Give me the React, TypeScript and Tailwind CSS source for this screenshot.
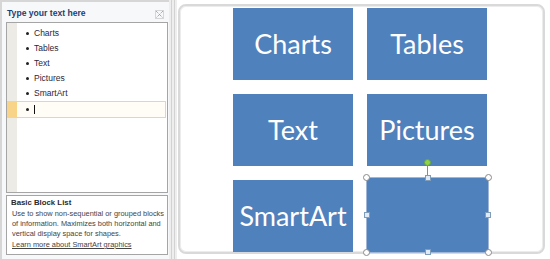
import React from "react";

const items = ["Charts", "Tables", "Text", "Pictures", "SmartArt"];

function Block({ label }: { label: string }) {
  return (
    <div className="flex h-[72px] w-[120px] items-center justify-center bg-[#4f81bd] text-[27px] text-white [font-family:Lato,'Open_Sans',sans-serif]">
      {label}
    </div>
  );
}

function SelectedBlock() {
  const circle = "absolute h-[7px] w-[7px] rounded-full border border-[#8a8a8a] bg-white";
  const square = "absolute h-[6px] w-[6px] border border-[#7f9db9] bg-[#dfeaf6]";
  return (
    <div className="relative mt-[-2px] h-[74px] w-[121px] bg-[#4f81bd] outline outline-1 outline-[#9fb6d6]">
      <div className="absolute left-[60px] top-[-14px] h-[14px] w-px bg-[#8a8a8a]" />
      <div className="absolute left-[57px] top-[-19px] h-[7px] w-[7px] rounded-full border border-[#6aa52c] bg-[#8fd34a]" />
      <div className={`${circle} left-[-4px] top-[-4px]`} />
      <div className={`${circle} right-[-4px] top-[-4px]`} />
      <div className={`${circle} bottom-[-4px] left-[-4px]`} />
      <div className={`${circle} bottom-[-4px] right-[-4px]`} />
      <div className={`${square} left-[58px] top-[-3px]`} />
      <div className={`${square} bottom-[-3px] left-[58px]`} />
      <div className={`${square} left-[-3px] top-[34px]`} />
      <div className={`${square} right-[-3px] top-[34px]`} />
    </div>
  );
}

export default function App() {
  return (
    <div className="flex h-[259px] w-[550px] overflow-hidden bg-white [font-family:'Liberation_Sans',Arial,sans-serif]">
      {/* text pane */}
      <div className="flex h-full w-[169px] flex-col border-l-2 border-t-2 border-[#d6d6d6] bg-[#f7f8f9] pl-[4px] pr-[1px]">
        <div className="flex h-[20px] shrink-0 items-center justify-between pl-[1px] pr-[4px] pt-[2px]">
          <span className="text-[8.6px] font-bold text-[#1e3f73]">Type your text here</span>
          <svg width="9" height="9" viewBox="0 0 9 9" className="mb-[-2px]">
            <path d="M1 1 L8 8 M8 1 L1 8" stroke="#8c8c8c" strokeWidth="1" strokeDasharray="1 1" />
            <rect x="0.5" y="0.5" width="8" height="8" fill="none" stroke="#b4b4b4" strokeDasharray="1 1" />
          </svg>
        </div>
        <div className="flex h-[171px] shrink-0 border border-[#a5a5a5] bg-white">
          <div className="flex w-[10px] flex-col bg-[#ecebe6] pt-[78px]">
            <div className="h-[17px] bg-[#f8d489]" />
          </div>
          <div className="flex-1 pt-[3px]">
            {items.map((t) => (
              <div key={t} className="flex h-[15px] items-center pl-[9px] text-[8.5px] text-[#2a2640]">
                <span className="mr-[5px] h-[3px] w-[3px] rounded-full bg-[#222]" />
                {t}
              </div>
            ))}
            <div className="mr-[1px] flex h-[17px] items-center border border-l-0 border-[#f6d58a] bg-[#fffdf6] pl-[9px]">
              <span className="mr-[5px] h-[3px] w-[3px] rounded-full bg-[#222]" />
              <span className="h-[9px] w-px bg-[#111]" />
            </div>
          </div>
        </div>
        <div className="h-[2px] shrink-0" />
        <div className="flex-1 border border-[#a5a5a5] bg-white px-[4px] pt-[2px] text-[7.4px] leading-[10px] text-[#444] whitespace-nowrap">
          <div className="text-[7.8px] font-bold text-[#2a2a2a]">Basic Block List</div>
          <div className="mt-[1px] pl-[1px]">Use to show non-sequential or grouped blocks</div>
          <div className="pl-[1px]">of information. Maximizes both horizontal and</div>
          <div className="pl-[1px]">vertical display space for shapes.</div>
          <div className="mt-[1px] pl-[1px] underline">Learn more about SmartArt graphics</div>
        </div>
        <div className="h-[4px] shrink-0" />
      </div>

      {/* splitter */}
      <div className="flex h-full w-[8px] justify-center gap-[2px] bg-[#eeeeee]">
        <div className="w-px bg-[#d2d2d2]" />
        <div className="w-px bg-[#d2d2d2]" />
      </div>

      {/* canvas */}
      <div className="flex-1 pb-[5px] pl-[1px] pr-[5px] pt-[4px]">
        <div className="h-full rounded-[8px] border-2 border-[#d9d9d9] pl-[53px] pt-[2px] shadow-[inset_0_0_0_1px_#ececec]">
          <div className="grid grid-cols-[120px_120px] gap-[14px]">
            <Block label="Charts" />
            <Block label="Tables" />
            <Block label="Text" />
            <Block label="Pictures" />
            <Block label="SmartArt" />
            <SelectedBlock />
          </div>
        </div>
      </div>
    </div>
  );
}
